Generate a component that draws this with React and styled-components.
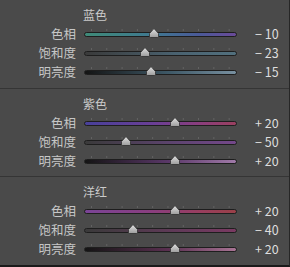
import React from "react";
import styled, { createGlobalStyle } from "styled-components";

const GlobalStyle = createGlobalStyle`
  html, body {
    margin: 0;
    padding: 0;
    background: #4a4a4a;
  }
  body {
    font-family: "Noto Sans CJK SC", "Noto Sans", sans-serif;
  }
`;

const groups = [
  {
    title: "蓝色",
    rows: [
      { label: "色相", value: -10, track: "linear-gradient(90deg, #3f8a78, #3f7890 45%, #4a5a98 75%, #6a4a98)" },
      { label: "饱和度", value: -23, track: "linear-gradient(90deg, #3a3a3a, #4a6270 60%, #52707e)" },
      { label: "明亮度", value: -15, track: "linear-gradient(90deg, #141414, #3e5866 55%, #7890a0)" },
    ],
  },
  {
    title: "紫色",
    rows: [
      { label: "色相", value: 20, track: "linear-gradient(90deg, #48409a, #6a3f96 45%, #8a3e7e 75%, #9a4060)" },
      { label: "饱和度", value: -50, track: "linear-gradient(90deg, #3a3a3a, #5e4470 60%, #74488a)" },
      { label: "明亮度", value: 20, track: "linear-gradient(90deg, #141414, #5a3868 55%, #a07aa8)" },
    ],
  },
  {
    title: "洋红",
    rows: [
      { label: "色相", value: 20, track: "linear-gradient(90deg, #7a4496, #8a3e7e 45%, #983e60 75%, #9a4048)" },
      { label: "饱和度", value: -40, track: "linear-gradient(90deg, #3a3a3a, #603a58 60%, #7a3a62)" },
      { label: "明亮度", value: 20, track: "linear-gradient(90deg, #141414, #5a3050 55%, #a87494)" },
    ],
  },
];

function formatValue(v) {
  if (v > 0) return "+ " + v;
  if (v < 0) return "\u2212 " + Math.abs(v);
  return "0";
}

function Thumb() {
  return (
    <svg width="10" height="10" viewBox="0 0 10 10">
      <defs>
        <linearGradient id="thumbFill" x1="0" y1="0" x2="0" y2="1">
          <stop offset="0" stopColor="#e2e2e2" />
          <stop offset="1" stopColor="#9c9c9c" />
        </linearGradient>
      </defs>
      <path
        d="M5 0.5 L9.5 5.5 L9.5 8.5 Q9.5 9.5 8.5 9.5 L1.5 9.5 Q0.5 9.5 0.5 8.5 L0.5 5.5 Z"
        fill="url(#thumbFill)"
        stroke="#2e2e2e"
        strokeWidth="0.8"
      />
    </svg>
  );
}

function SliderRow({ label, value, track }) {
  // thumb centre: 0 sits at 77px into the track, ±100 spans ±70px
  const left = 77 + value * 0.7 - 5;
  return (
    <Row>
      <Label>{label}</Label>
      <TrackArea>
        <Ticks />
        <Track style={{ background: track }} />
        <ThumbWrap style={{ left }}>
          <Thumb />
        </ThumbWrap>
      </TrackArea>
      <Value>{formatValue(value)}</Value>
    </Row>
  );
}

export default function App() {
  return (
    <Panel>
      <GlobalStyle />
      {groups.map(g => (
        <Section key={g.title}>
          <Title>{g.title}</Title>
          {g.rows.map(r => (
            <SliderRow key={r.label} {...r} />
          ))}
        </Section>
      ))}
    </Panel>
  );
}

const Panel = styled.div`
  width: 289px;
  height: 265px;
  display: flex;
  flex-direction: column;
  background: #4a4a4a;
  border-right: 1px solid #262626;
  border-bottom: 2px solid #1a1a1a;
  overflow: hidden;
`;

const Section = styled.section`
  height: 88px;
  box-sizing: border-box;
  padding-top: 6px;
  display: flex;
  flex-direction: column;
  & + & {
    border-top: 1px solid #353535;
    height: 89px;
  }
`;

const Title = styled.div`
  height: 18px;
  line-height: 18px;
  padding-left: 83px;
  font-size: 12px;
  color: #cbcbcb;
`;

const Row = styled.div`
  display: grid;
  grid-template-columns: 76px 153px auto;
  column-gap: 8px;
  height: 19px;
  align-items: center;
`;

const Label = styled.div`
  text-align: right;
  font-size: 12.5px;
  color: #c6c6c6;
  line-height: 19px;
`;

const TrackArea = styled.div`
  position: relative;
  height: 19px;
  display: flex;
  flex-direction: column;
  padding-top: 5px;
  box-sizing: border-box;
  gap: 1px;
`;

const Ticks = styled.div`
  height: 2px;
  margin: 0 6px 0 7px;
  background-image: linear-gradient(90deg, #636363 1px, transparent 1px);
  background-size: 15.3px 2px;
  background-repeat: repeat-x;
`;

const Track = styled.div`
  height: 3px;
  border: 1px solid #1e1e1e;
  border-radius: 3px;
`;

const ThumbWrap = styled.div`
  position: absolute;
  top: 4px;
  width: 10px;
  height: 10px;
  line-height: 0;
`;

const Value = styled.div`
  padding-left: 10px;
  font-size: 12.5px;
  color: #dedede;
  white-space: nowrap;
  line-height: 19px;
`;
